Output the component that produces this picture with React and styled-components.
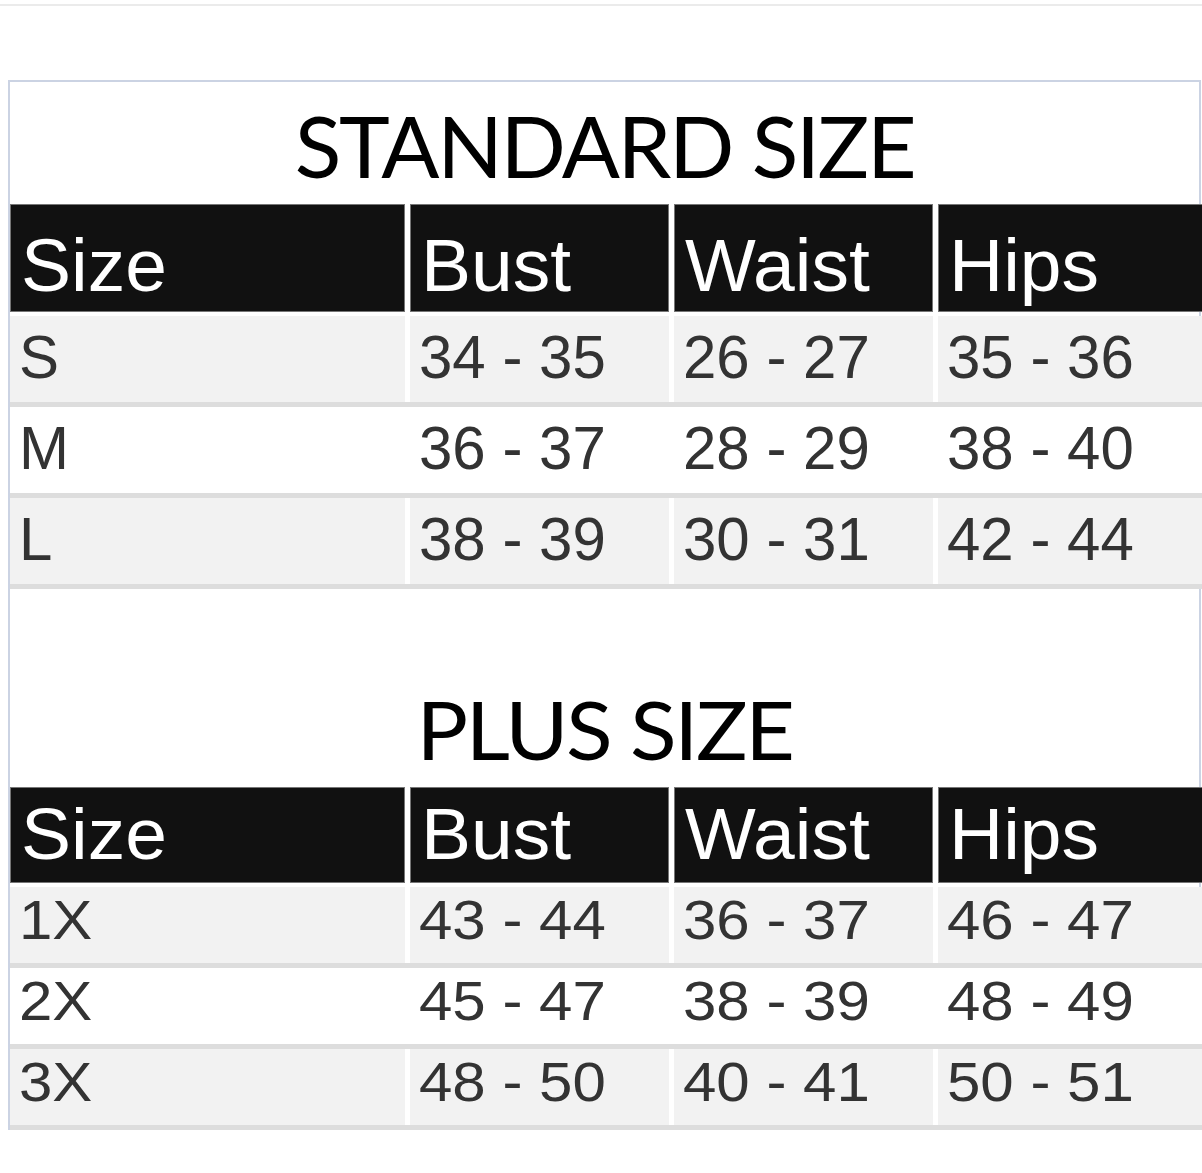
import React from 'react';
import styled, { createGlobalStyle } from 'styled-components';

const GlobalStyle = createGlobalStyle`
html, body {
    margin: 0;
    padding: 0;
    background: #fff;
    overflow: hidden;
}
`

const TopRule = styled.div`
height: 2px;
margin-top: 4px;
background: #ebebeb;
`

const Frame = styled.div`
box-sizing: border-box;
width: 1193px;
margin: 74px 0 0 8px;
border: 2px solid #cbd3e3;
border-bottom: none;
`

const TitleBlock = styled.div`
box-sizing: border-box;
height: ${p => p.$height}px;
display: flex;
align-items: flex-end;
justify-content: center;
padding-bottom: ${p => p.$pad}px;
`

const Title = styled.span`
display: inline-block;
font-family: Lato, "Open Sans", sans-serif;
font-size: 86px;
line-height: 1;
letter-spacing: -2.4px;
color: #000;
transform: scaleY(${p => p.$squash});
transform-origin: 50% 88.7%;
`

const Row = styled.div`
display: grid;
grid-template-columns: 395px 259px 259px 280px;
column-gap: 5px;
width: 1208px;
`

const HeadRow = styled(Row)`
margin-bottom: 4px;
`

const HeadCell = styled.div`
box-sizing: border-box;
height: ${p => p.$height}px;
padding: ${p => p.$pad}px 0 0 10px;
background: #111;
border: 1px solid #767676;
`

const BodyRow = styled(Row)`
border-bottom: 5px solid #dddddd;
background: #fff;
`

const BodyCell = styled.div`
box-sizing: border-box;
height: ${p => p.$height}px;
padding: ${p => p.$pad}px 0 0 9px;
background: ${p => (p.$shaded ? '#f2f2f2' : '#fff')};
`

const CellText = styled.span`
display: inline-block;
font-family: "Liberation Sans", Arial, sans-serif;
font-size: ${p => p.$size}px;
line-height: 1;
color: ${p => p.$color};
white-space: nowrap;
transform: scaleY(${p => p.$squash});
transform-origin: 0 84.65%;
`

const columns = ['Size', 'Bust', 'Waist', 'Hips']

const charts = [
    {
        title: 'STANDARD SIZE',
        titleHeight: 122,
        titlePad: 16,
        titleSquash: 1,
        headHeight: 108,
        headPad: 23,
        headSquash: 1,
        rowHeight: 86,
        rowPad: 12,
        rowSquash: 1.01,
        rows: [
            ['S', '34 - 35', '26 - 27', '35 - 36'],
            ['M', '36 - 37', '28 - 29', '38 - 40'],
            ['L', '38 - 39', '30 - 31', '42 - 44'],
        ],
    },
    {
        title: 'PLUS SIZE',
        titleHeight: 198,
        titlePad: 17,
        titleSquash: 0.94,
        headHeight: 96,
        headPad: 8,
        headSquash: 0.97,
        rowHeight: 76,
        rowPad: 2,
        rowSquash: 0.93,
        rows: [
            ['1X', '43 - 44', '36 - 37', '46 - 47'],
            ['2X', '45 - 47', '38 - 39', '48 - 49'],
            ['3X', '48 - 50', '40 - 41', '50 - 51'],
        ],
    },
]

function SizeChart({ chart }) {
    return (
        <>
            <TitleBlock $height={chart.titleHeight} $pad={chart.titlePad}>
                <Title $squash={chart.titleSquash}>{chart.title}</Title>
            </TitleBlock>
            <HeadRow>
                {columns.map(col => (
                    <HeadCell key={col} $height={chart.headHeight} $pad={chart.headPad}>
                        <CellText $size={75} $color='#fff' $squash={chart.headSquash}>{col}</CellText>
                    </HeadCell>
                ))}
            </HeadRow>
            {chart.rows.map((row, i) => (
                <BodyRow key={row[0]}>
                    {row.map((value, j) => (
                        <BodyCell key={j} $height={chart.rowHeight} $pad={chart.rowPad} $shaded={i % 2 === 0}>
                            <CellText $size={60} $color='#333' $squash={chart.rowSquash}>{value}</CellText>
                        </BodyCell>
                    ))}
                </BodyRow>
            ))}
        </>
    )
}

export default function App() {
    return (
        <>
            <GlobalStyle />
            <TopRule />
            <Frame>
                {charts.map(chart => (
                    <SizeChart key={chart.title} chart={chart} />
                ))}
            </Frame>
        </>
    )
}
